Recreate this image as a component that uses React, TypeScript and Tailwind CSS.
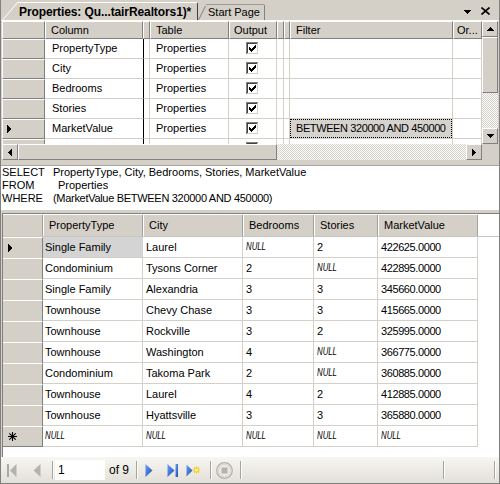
import React from "react";

const R =
  "bg-[#d4d0c8] border border-t-white border-l-white border-r-[#808080] border-b-[#808080]";
const TRACK =
  "bg-[repeating-conic-gradient(#d4d0c8_0_25%,#ffffff_0_50%)] bg-[length:2px_2px]";

function Arrow({ dir }: { dir: "up" | "down" | "left" | "right" }) {
  if (dir === "up")
    return (
      <svg width="7" height="4" shapeRendering="crispEdges">
        <rect x="3" y="0" width="1" height="1" fill="#000" />
        <rect x="2" y="1" width="3" height="1" fill="#000" />
        <rect x="1" y="2" width="5" height="1" fill="#000" />
        <rect x="0" y="3" width="7" height="1" fill="#000" />
      </svg>
    );
  if (dir === "down")
    return (
      <svg width="7" height="4" shapeRendering="crispEdges">
        <rect x="0" y="0" width="7" height="1" fill="#000" />
        <rect x="1" y="1" width="5" height="1" fill="#000" />
        <rect x="2" y="2" width="3" height="1" fill="#000" />
        <rect x="3" y="3" width="1" height="1" fill="#000" />
      </svg>
    );
  if (dir === "left")
    return (
      <svg width="4" height="7" shapeRendering="crispEdges">
        <rect x="3" y="0" width="1" height="7" fill="#000" />
        <rect x="2" y="1" width="1" height="5" fill="#000" />
        <rect x="1" y="2" width="1" height="3" fill="#000" />
        <rect x="0" y="3" width="1" height="1" fill="#000" />
      </svg>
    );
  return (
    <svg width="4" height="7" shapeRendering="crispEdges">
      <rect x="0" y="0" width="1" height="7" fill="#000" />
      <rect x="1" y="1" width="1" height="5" fill="#000" />
      <rect x="2" y="2" width="1" height="3" fill="#000" />
      <rect x="3" y="3" width="1" height="1" fill="#000" />
    </svg>
  );
}

function RowPointer() {
  return (
    <svg width="4" height="8" shapeRendering="crispEdges">
      <rect x="0" y="0" width="1" height="8" fill="#000" />
      <rect x="1" y="1" width="1" height="6" fill="#000" />
      <rect x="2" y="2" width="1" height="4" fill="#000" />
      <rect x="3" y="3" width="1" height="2" fill="#000" />
    </svg>
  );
}

function Check() {
  return (
    <svg width="13" height="13" shapeRendering="crispEdges">
      <rect x="0" y="0" width="13" height="13" fill="#ffffff" />
      <rect x="0" y="0" width="12" height="1" fill="#808080" />
      <rect x="0" y="0" width="1" height="12" fill="#808080" />
      <rect x="1" y="1" width="10" height="1" fill="#404040" />
      <rect x="1" y="1" width="1" height="10" fill="#404040" />
      <rect x="1" y="11" width="11" height="1" fill="#d4d0c8" />
      <rect x="11" y="1" width="1" height="11" fill="#d4d0c8" />
      <rect x="3" y="5" width="1" height="3" fill="#000" />
      <rect x="4" y="6" width="1" height="3" fill="#000" />
      <rect x="5" y="7" width="1" height="3" fill="#000" />
      <rect x="6" y="6" width="1" height="3" fill="#000" />
      <rect x="7" y="5" width="1" height="3" fill="#000" />
      <rect x="8" y="4" width="1" height="3" fill="#000" />
      <rect x="9" y="3" width="1" height="3" fill="#000" />
    </svg>
  );
}

function Star() {
  return (
    <svg width="9" height="9" viewBox="0 0 9 9">
      <path
        d="M4.5 0 V9 M0 4.5 H9 M1.3 1.3 L7.7 7.7 M7.7 1.3 L1.3 7.7"
        stroke="#000"
        strokeWidth="1.1"
      />
    </svg>
  );
}

const crit: [string, string, string][] = [
  ["PropertyType", "Properties", ""],
  ["City", "Properties", ""],
  ["Bedrooms", "Properties", ""],
  ["Stories", "Properties", ""],
  ["MarketValue", "Properties", "BETWEEN 320000 AND 450000"],
  ["", "", ""],
];

const results: string[][] = [
  ["Single Family", "Laurel", "NULL", "2", "422625.0000"],
  ["Condominium", "Tysons Corner", "2", "NULL", "422895.0000"],
  ["Single Family", "Alexandria", "3", "3", "345660.0000"],
  ["Townhouse", "Chevy Chase", "3", "3", "415665.0000"],
  ["Townhouse", "Rockville", "3", "2", "325995.0000"],
  ["Townhouse", "Washington", "4", "NULL", "366775.0000"],
  ["Condominium", "Takoma Park", "2", "NULL", "360885.0000"],
  ["Townhouse", "Laurel", "4", "2", "412885.0000"],
  ["Townhouse", "Hyattsville", "3", "3", "365880.0000"],
  ["NULL", "NULL", "NULL", "NULL", "NULL"],
];

function Val({ v }: { v: string }) {
  if (v === "NULL")
    return (
      <span className="inline-block italic text-[10px] scale-x-[0.78] origin-left">NULL</span>
    );
  if (/^[0-9.]+$/.test(v)) return <span className="tracking-[-0.4px]">{v}</span>;
  return <span>{v}</span>;
}

function Sep() {
  return (
    <div className="flex h-[18px] w-[2px] shrink-0">
      <div className="w-[1px] bg-[#a6a59c]" />
      <div className="w-[1px] bg-white" />
    </div>
  );
}

function BlueGrad({ id }: { id: string }) {
  return (
    <defs>
      <linearGradient id={id} x1="0" y1="0" x2="1" y2="1">
        <stop offset="0" stopColor="#6fa3f5" />
        <stop offset="1" stopColor="#1747b8" />
      </linearGradient>
    </defs>
  );
}

export default function App() {
  return (
    <div className="w-[500px] h-[484px] bg-[#d4d0c8] border-l border-r border-b border-[#808080] flex flex-col overflow-hidden font-['Liberation_Sans',Arial,sans-serif] text-[11px] text-black leading-none">
      {/* Tab strip */}
      <div className="h-[21px] shrink-0 flex items-end border-b border-white">
        <div className="flex items-end ml-[1px] h-[18px]">
          <svg width="16" height="18" className="block">
            <path d="M0 18 L15 1 L16 1 L16 18 Z" fill="#d4d0c8" />
            <path d="M0.5 18 L15.5 0.5 L16 0.5" stroke="#ffffff" strokeWidth="1" fill="none" />
          </svg>
          <div className="h-[18px] w-[180px] border-t border-t-white border-r border-r-[#404040] rounded-tr-[2px] bg-[#d4d0c8] flex items-center pl-[1px] pt-[1px]">
            <span className="font-bold text-[12px] whitespace-nowrap tracking-[-0.1px]">
              Properties: Qu...tairRealtors1)*
            </span>
          </div>
        </div>
        <div className="flex items-end h-[16px]">
          <svg width="8" height="16" className="block">
            <path d="M0.5 16 L7.5 2" stroke="#808080" strokeWidth="1" fill="none" />
          </svg>
          <div className="h-[16px] w-[59px] border-t border-t-[#9c9a94] border-r border-r-[#808080] rounded-tr-[2px] flex items-center pl-[2px]">
            <span className="whitespace-nowrap">Start Page</span>
          </div>
        </div>
        <div className="flex-1" />
        <div className="self-start mt-[10px]">
          <Arrow dir="down" />
        </div>
        <div className="self-start mt-[7px] ml-[10px] mr-[9px]">
          <svg width="9" height="8" viewBox="0 0 9 8" className="block">
            <path d="M0.5 0.5 L8.5 7.5 M8.5 0.5 L0.5 7.5" stroke="#000" strokeWidth="1.6" />
          </svg>
        </div>
      </div>

      {/* Criteria pane */}
      <div className="flex shrink-0 pl-[1px] h-[123px]">
        <div className="w-[480px] flex flex-col">
          <div className="flex h-[18px] shrink-0">
            <div className={`w-[43px] ${R}`} />
            <div className={`w-[98px] ${R} pl-[5px] flex items-center`}>Column</div>
            <div className={`w-[7px] ${R}`} />
            <div className={`w-[79px] ${R} pl-[5px] flex items-center`}>Table</div>
            <div className={`w-[48px] ${R} pl-[4px] flex items-center`}>Output</div>
            <div className={`w-[7px] ${R}`} />
            <div className={`w-[6px] ${R}`} />
            <div className={`w-[163px] ${R} pl-[5px] flex items-center`}>Filter</div>
            <div className={`w-[29px] ${R} pl-[3px] flex items-center whitespace-nowrap overflow-hidden`}>Or...</div>
          </div>
          <div className="h-[105px] overflow-hidden bg-white">
            {crit.map((r, i) => (
              <div key={i} className="flex h-[20px]">
                <div className={`w-[43px] ${R} flex items-center pl-[4px]`}>
                  {i === 4 ? <RowPointer /> : null}
                </div>
                <div className="w-[98px] border-b border-[#d4d0c8] pl-[7px] flex items-center">{r[0]}</div>
                <div className="w-[7px] border-l border-l-black border-r border-r-[#d4d0c8] border-b border-b-[#d4d0c8]" />
                <div className="w-[79px] border-r border-b border-[#d4d0c8] pl-[6px] flex items-center">{r[1]}</div>
                <div className="w-[48px] border-r border-b border-[#d4d0c8] flex items-center justify-center">
                  <Check />
                </div>
                <div className="w-[7px] border-r border-b border-[#d4d0c8]" />
                <div className="w-[6px] border-r border-b border-[#d4d0c8]" />
                <div className="w-[163px] border-r border-b border-[#d4d0c8] flex items-center">
                  {r[2] ? (
                    <div className="w-full h-full bg-[#d6d3ce] border border-dotted border-black flex items-center pl-[5px] whitespace-nowrap tracking-[-0.4px]">
                      {r[2]}
                    </div>
                  ) : null}
                </div>
                <div className="w-[29px] border-r border-b border-[#d4d0c8]" />
              </div>
            ))}
          </div>
        </div>
        {/* vertical scrollbar */}
        <div className="w-[16px] flex flex-col">
          <div className={`h-[16px] ${R} flex items-center justify-center`}>
            <Arrow dir="up" />
          </div>
          <div className={`h-[56px] ${R}`} />
          <div className={`flex-1 ${TRACK}`} />
          <div className={`h-[16px] ${R} flex items-center justify-center`}>
            <Arrow dir="down" />
          </div>
        </div>
      </div>

      {/* horizontal scrollbar */}
      <div className="flex h-[16px] shrink-0 pl-[1px]">
        <div className={`w-[16px] ${R} flex items-center justify-center`}>
          <Arrow dir="left" />
        </div>
        <div className={`w-[259px] ${R}`} />
        <div className={`flex-1 ${TRACK}`} />
        <div className={`w-[16px] ${R} flex items-center justify-center`}>
          <Arrow dir="right" />
        </div>
        <div className="w-[17px]" />
      </div>

      <div className="h-[6px] shrink-0 border-b border-[#a8a59e]" />

      {/* SQL pane */}
      <div className="h-[44px] shrink-0 bg-white pl-[1px] leading-[13px] whitespace-nowrap">
        <div className="flex">
          <span className="w-[51px]">SELECT</span>
          <span>PropertyType, City, Bedrooms, Stories, MarketValue</span>
        </div>
        <div className="flex">
          <span className="w-[56px]">FROM</span>
          <span>Properties</span>
        </div>
        <div className="flex">
          <span className="w-[51px]">WHERE</span>
          <span className="tracking-[-0.3px]">(MarketValue BETWEEN 320000 AND 450000)</span>
        </div>
      </div>

      <div className="h-[3px] shrink-0" />

      {/* Results pane */}
      <div className="h-[244px] shrink-0 ml-[1px] bg-white border-t border-l border-[#808080] pt-[1px]">
        <div className="flex h-[22px] border-b border-[#c8c5bd]">
          <div className="w-[40px] bg-[#d4d0c8] border-r border-r-[#a0a0a0]" />
          <div className="w-[100px] bg-[#d4d0c8] border-l border-l-white border-r border-r-[#a0a0a0] pl-[5px] flex items-center">PropertyType</div>
          <div className="w-[100px] bg-[#d4d0c8] border-l border-l-white border-r border-r-[#a0a0a0] pl-[5px] flex items-center">City</div>
          <div className="w-[71px] bg-[#d4d0c8] border-l border-l-white border-r border-r-[#a0a0a0] pl-[5px] flex items-center">Bedrooms</div>
          <div className="w-[64px] bg-[#d4d0c8] border-l border-l-white border-r border-r-[#a0a0a0] pl-[5px] flex items-center">Stories</div>
          <div className="w-[100px] bg-[#d4d0c8] border-l border-l-white border-r border-r-[#a0a0a0] pl-[5px] flex items-center">MarketValue</div>
        </div>
        {results.map((r, i) => (
          <div key={i} className="flex h-[21px]">
            <div
              className={`w-[40px] bg-[#d4d0c8] border-t border-t-white border-r border-r-[#808080] ${
                i === 9 ? "border-b border-b-[#808080]" : ""
              } flex items-center pl-[5px]`}
            >
              {i === 0 ? <RowPointer /> : i === 9 ? <Star /> : null}
            </div>
            <div
              className={`w-[100px] border-r border-b border-[#d4d0c8] pl-[2px] flex items-center ${
                i === 0 ? "bg-[#d4d4d4]" : ""
              }`}
            >
              <Val v={r[0]} />
            </div>
            <div className="w-[100px] border-r border-b border-[#d4d0c8] pl-[3px] flex items-center">
              <Val v={r[1]} />
            </div>
            <div className="w-[71px] border-r border-b border-[#d4d0c8] pl-[3px] flex items-center">
              <Val v={r[2]} />
            </div>
            <div className="w-[64px] border-r border-b border-[#d4d0c8] pl-[3px] flex items-center">
              <Val v={r[3]} />
            </div>
            <div className="w-[100px] border-r border-b border-[#d4d0c8] pl-[3px] flex items-center">
              <Val v={r[4]} />
            </div>
          </div>
        ))}
      </div>

      {/* Toolbar */}
      <div className="h-[26px] shrink-0 flex items-center bg-linear-to-b from-[#f7f6f2] to-[#e2e0d7] pl-[6px]">
        <svg width="10" height="13" className="shrink-0">
          <rect x="0" y="0" width="2" height="13" fill="#a9a8a2" />
          <path d="M9.5 0 L3 6.5 L9.5 13 Z" fill="#b3b2ab" />
        </svg>
        <svg width="8" height="13" className="shrink-0 ml-[16px]">
          <path d="M7.5 0 L0.5 6.5 L7.5 13 Z" fill="#b3b2ab" />
        </svg>
        <div className="ml-[11px]">
          <Sep />
        </div>
        <div className="ml-[1px] w-[50px] h-[20px] bg-white flex items-center pl-[3px] text-[12px]">1</div>
        <div className="ml-[4px] w-[27px] text-[12px] whitespace-nowrap">of 9</div>
        <Sep />
        <svg width="8" height="13" className="shrink-0 ml-[7px]">
          <BlueGrad id="g1" />
          <path d="M0.5 0 L7.5 6.5 L0.5 13 Z" fill="url(#g1)" />
        </svg>
        <svg width="11" height="13" className="shrink-0 ml-[14px]">
          <BlueGrad id="g2" />
          <path d="M0.5 0 L7.5 6.5 L0.5 13 Z" fill="url(#g2)" />
          <rect x="8.5" y="0" width="2.5" height="13" fill="url(#g2)" />
        </svg>
        <svg width="14" height="13" className="shrink-0 ml-[8px]">
          <BlueGrad id="g3" />
          <path d="M0.5 0.5 L6.5 6.5 L0.5 12.5 Z" fill="url(#g3)" />
          <path
            d="M10.5 2.5 V9.5 M7 6 H14 M8 3.5 L13 8.5 M13 3.5 L8 8.5"
            stroke="#f4c81c"
            strokeWidth="1.2"
          />
          <circle cx="10.5" cy="6" r="1.5" fill="#fff3a0" />
        </svg>
        <div className="ml-[10px]">
          <Sep />
        </div>
        <svg width="17" height="17" className="shrink-0 ml-[4px]">
          <circle cx="8.5" cy="8.5" r="7.8" fill="#eceae4" stroke="#b0afa8" strokeWidth="1.2" />
          <circle cx="8.5" cy="8.5" r="6" fill="none" stroke="#d6d4cc" strokeWidth="1" />
          <rect x="5.5" y="5.5" width="6" height="6" fill="#b3b2ab" />
        </svg>
        <div className="ml-[7px]">
          <Sep />
        </div>
        <div className="ml-[201px]">
          <Sep />
        </div>
        <div className="ml-[49px]">
          <Sep />
        </div>
      </div>
    </div>
  );
}
